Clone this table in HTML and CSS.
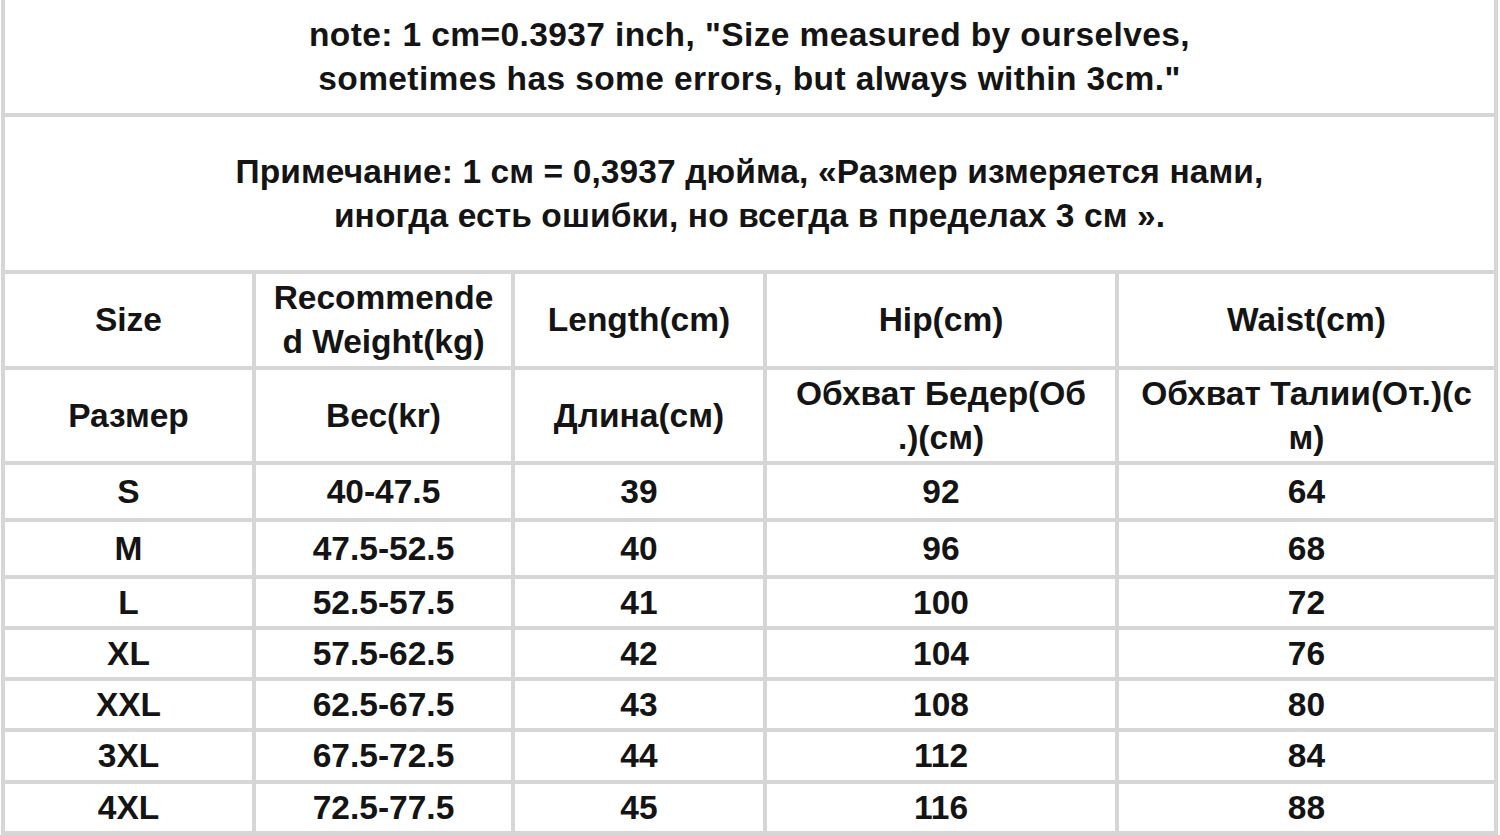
FILE: index.html
```html
<!DOCTYPE html>
<html lang="ru">
<head>
<meta charset="utf-8">
<title>Size chart</title>
<link rel="stylesheet" href="styles.css">
</head>
<body>
<div class="chart">
  <div class="cell note note-en">note: 1 cm=0.3937 inch, "Size measured by ourselves,<br>sometimes has some errors, but always within 3cm."</div>
  <div class="cell note">Примечание: 1 см = 0,3937 дюйма, «Размер измеряется нами,<br>иногда есть ошибки, но всегда в пределах 3 см ».</div>

  <div class="cell">Size</div>
  <div class="cell">Recommende<br>d Weight(kg)</div>
  <div class="cell">Length(cm)</div>
  <div class="cell">Hip(cm)</div>
  <div class="cell">Waist(cm)</div>

  <div class="cell">Размер</div>
  <div class="cell">Вес(kr)</div>
  <div class="cell">Длина(см)</div>
  <div class="cell">Обхват Бедер(Об<br>.)(см)</div>
  <div class="cell">Обхват Талии(От.)(с<br>м)</div>

  <div class="cell">S</div><div class="cell">40-47.5</div><div class="cell">39</div><div class="cell">92</div><div class="cell">64</div>
  <div class="cell">M</div><div class="cell">47.5-52.5</div><div class="cell">40</div><div class="cell">96</div><div class="cell">68</div>
  <div class="cell">L</div><div class="cell">52.5-57.5</div><div class="cell">41</div><div class="cell">100</div><div class="cell">72</div>
  <div class="cell">XL</div><div class="cell">57.5-62.5</div><div class="cell">42</div><div class="cell">104</div><div class="cell">76</div>
  <div class="cell">XXL</div><div class="cell">62.5-67.5</div><div class="cell">43</div><div class="cell">108</div><div class="cell">80</div>
  <div class="cell">3XL</div><div class="cell">67.5-72.5</div><div class="cell">44</div><div class="cell">112</div><div class="cell">84</div>
  <div class="cell">4XL</div><div class="cell">72.5-77.5</div><div class="cell">45</div><div class="cell">116</div><div class="cell">88</div>
</div>
</body>
</html>
```

FILE: styles.css
```css
html, body {
  margin: 0;
  padding: 0;
  background: #ffffff;
}

.chart {
  margin-left: 1px;
  width: 1497px;
  box-sizing: border-box;
  height: 835px;
  display: grid;
  grid-template-columns: 247px 255px 248px 348px 375px;
  grid-template-rows: 113px 153px 92px 91px 53px 53px 47px 47px 47px 48px 47px;
  gap: 4px;
  padding: 0 4px 4px 4px;
  background: #d6d6d6;
  font-family: "Liberation Sans", Arial, "Noto Sans", sans-serif;
  font-weight: bold;
  font-size: 33.5px;
  line-height: 44px;
  color: #141414;
}

.cell {
  background: #ffffff;
  display: flex;
  align-items: center;
  justify-content: center;
  text-align: center;
}

.note {
  grid-column: 1 / -1;
  line-height: 44px;
  letter-spacing: 0.1px;
}

.note-en {
  letter-spacing: 0.4px;
}
```
